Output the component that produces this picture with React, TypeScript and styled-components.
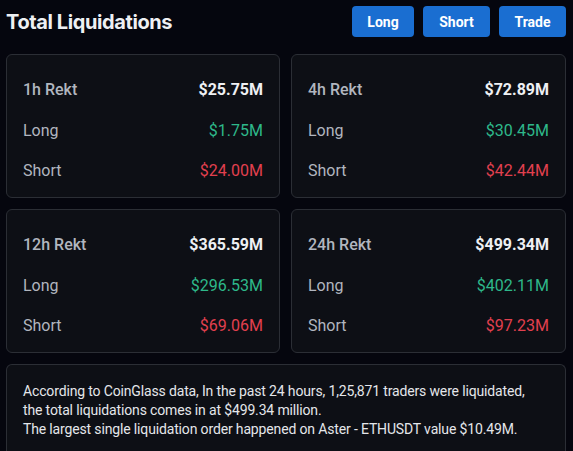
import * as React from 'react'
import styled, { createGlobalStyle } from 'styled-components'

// ***** Global
const GlobalStyle = createGlobalStyle`
  html, body {
    margin: 0;
    padding: 0;
    background: #05060e;
  }
  body {
    font-family: Roboto, "Noto Sans", sans-serif;
    -webkit-font-smoothing: antialiased;
  }
`

// ***** Styled Components
const Page = styled.main`
  width: 573px;
  height: 451px;
  overflow: hidden;
  padding: 6px 7px 0 6px;
  box-sizing: border-box;
  display: flex;
  flex-direction: column;
  gap: 11px;
`

const Header = styled.header`
  display: flex;
  align-items: center;
  justify-content: space-between;
  height: 31px;
  margin-bottom: 6px;
`

const Title = styled.h1`
  margin: 0;
  font-family: Inter, sans-serif;
  font-size: 20px;
  font-weight: 700;
  letter-spacing: -0.4px;
  color: #eef0f3;
`

const ButtonGroup = styled.div`
  display: flex;
  gap: 9px;
`

const ActionButton = styled.button<{ $width: number }>`
  width: ${(p) => p.$width}px;
  height: 31px;
  border: none;
  border-radius: 4px;
  background: #1a6ed1;
  color: #ffffff;
  font-family: Roboto, sans-serif;
  font-size: 14px;
  font-weight: 700;
  padding: 0;
`

const Grid = styled.section`
  display: grid;
  grid-template-columns: 274px 275px;
  column-gap: 11px;
  row-gap: 11px;
`

const Card = styled.article`
  height: 144px;
  box-sizing: border-box;
  background: #0d0f15;
  border: 1px solid #2b2e35;
  border-radius: 6px;
  padding: 14px 16px 6px 16px;
  display: flex;
  flex-direction: column;
`

const Row = styled.div`
  height: 41px;
  display: flex;
  align-items: center;
  justify-content: space-between;
  font-size: 16px;
`

const Label = styled.span<{ $strong?: boolean }>`
  color: #b1b6bf;
  font-weight: ${(p) => (p.$strong ? 500 : 400)};
`

const Value = styled.span<{ $tone: 'total' | 'long' | 'short' }>`
  font-weight: ${(p) => (p.$tone === 'total' ? 700 : 400)};
  color: ${(p) =>
    p.$tone === 'total' ? '#eef0f3' : p.$tone === 'long' ? '#2eb88a' : '#e2404f'};
`

const Summary = styled.section`
  flex: 1;
  background: #0d0f15;
  border: 1px solid #2b2e35;
  border-bottom: none;
  border-radius: 6px 6px 0 0;
  padding: 17px 16px 0 16px;
  color: #e4e6ea;
  font-size: 14px;
  line-height: 19px;
  letter-spacing: -0.15px;
`

// ***** Data
interface Stat {
  period: string
  total: string
  long: string
  short: string
}

const stats: Stat[] = [
  { period: '1h Rekt', total: '$25.75M', long: '$1.75M', short: '$24.00M' },
  { period: '4h Rekt', total: '$72.89M', long: '$30.45M', short: '$42.44M' },
  { period: '12h Rekt', total: '$365.59M', long: '$296.53M', short: '$69.06M' },
  { period: '24h Rekt', total: '$499.34M', long: '$402.11M', short: '$97.23M' },
]

// ***** Component
export default function App() {
  return (
    <>
      <GlobalStyle />
      <Page>
        <Header>
          <Title>Total Liquidations</Title>
          <ButtonGroup>
            <ActionButton $width={62}>Long</ActionButton>
            <ActionButton $width={67}>Short</ActionButton>
            <ActionButton $width={67}>Trade</ActionButton>
          </ButtonGroup>
        </Header>
        <Grid>
          {stats.map((s) => (
            <Card key={s.period}>
              <Row>
                <Label $strong>{s.period}</Label>
                <Value $tone="total">{s.total}</Value>
              </Row>
              <Row>
                <Label>Long</Label>
                <Value $tone="long">{s.long}</Value>
              </Row>
              <Row>
                <Label>Short</Label>
                <Value $tone="short">{s.short}</Value>
              </Row>
            </Card>
          ))}
        </Grid>
        <Summary>
          According to CoinGlass data, In the past 24 hours, 1,25,871 traders were liquidated,
          <br />
          the total liquidations comes in at $499.34 million.
          <br />
          The largest single liquidation order happened on Aster - ETHUSDT value $10.49M.
        </Summary>
      </Page>
    </>
  )
}
